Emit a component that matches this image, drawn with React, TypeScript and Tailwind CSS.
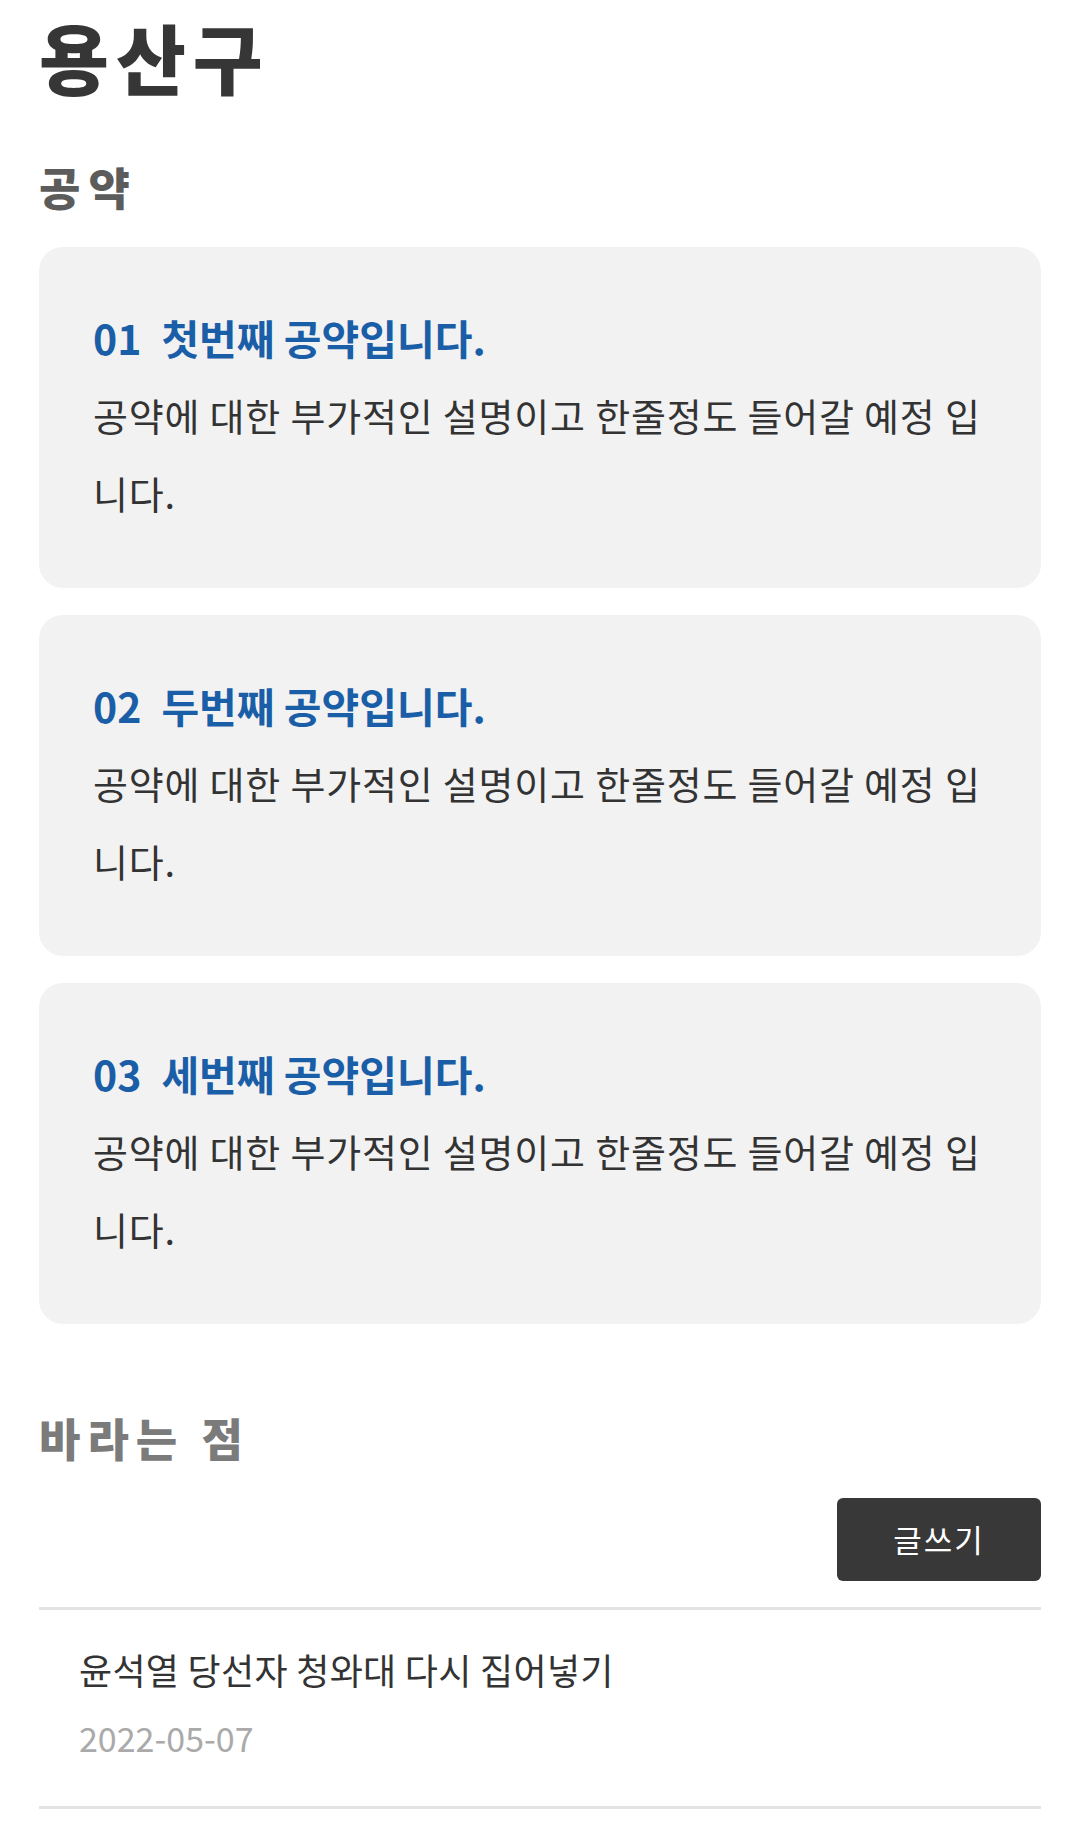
const pledges = [
  { no: "01", title: "첫번째 공약입니다." },
  { no: "02", title: "두번째 공약입니다." },
  { no: "03", title: "세번째 공약입니다." },
];

const font = "font-['Noto_Sans_CJK_KR','Noto_Sans',sans-serif]";

export default function App() {
  return (
    <div className={`${font} min-h-[1827px] bg-white px-[39px] pt-[11px]`}>
      <h1 className="text-[76px] leading-[90px] font-black tracking-[7px] text-[#363636]">용산구</h1>

      {/* 공약 */}
      <section className="mt-[56px]">
        <h2 className="text-[45px] leading-[60px] font-black tracking-[8px] text-[#5c5c5c]">공약</h2>
        <div className="mt-[30px] flex flex-col gap-[27px]">
          {pledges.map((p) => (
            <div key={p.no} className="rounded-[24px] bg-[#f2f2f2] pt-[62px] pr-[44px] pb-[56px] pl-[54px]">
              <h3 className="text-[41px] leading-[56px] font-bold text-[#1a5ea8]">
                <span className="mr-[20px]">{p.no}</span>
                {p.title}
              </h3>
              <p className="mt-[11px] text-[38px] leading-[78px] tracking-[0.8px] break-all text-[#333333]">
                공약에 대한 부가적인 설명이고 한줄정도 들어갈 예정 입니다.
              </p>
            </div>
          ))}
        </div>
      </section>

      {/* 바라는 점 */}
      <section className="mt-[84px]">
        <h2 className="text-[45px] leading-[60px] font-black tracking-[7px] text-[#7b7b7b]">바라는 점</h2>
        <div className="mt-[30px] flex justify-end">
          <button className="h-[83px] w-[204px] rounded-[6px] bg-[#383838] text-[31px] tracking-[2px] text-white">
            글쓰기
          </button>
        </div>
        <ul className="mt-[26px] border-t-[3px] border-[#e3e3e3]">
          <li className="border-b-[3px] border-[#e3e3e3] px-[40px] pt-[34px] pb-[46px]">
            <p className="text-[36px] leading-[50px] tracking-[0.3px] text-[#333333]">윤석열 당선자 청와대 다시 집어넣기</p>
            <p className="mt-[22px] text-[34px] leading-[44px] text-[#aaaaaa]">2022-05-07</p>
          </li>
        </ul>
      </section>
    </div>
  );
}
